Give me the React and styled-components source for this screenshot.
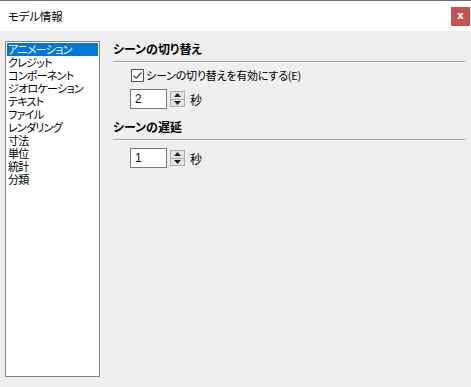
import React from "react";
import styled, { createGlobalStyle } from "styled-components";

const Global = createGlobalStyle`
  html, body { margin: 0; padding: 0; background: #efefef; }
  body {
    font-family: "Noto Sans CJK JP", "Noto Sans", sans-serif;
    font-size: 12px;
    color: #000;
    font-feature-settings: "palt" 1;
  }
  * { box-sizing: border-box; }
`;

const Window = styled.div`
  width: 471px;
  height: 387px;
  display: flex;
  flex-direction: column;
  border-top: 1px solid #6e6e6e;
  background: #efefef;
  overflow: hidden;
`;

const TitleBar = styled.div`
  height: 30px;
  flex: none;
  background: #fff;
  display: flex;
  align-items: center;
  justify-content: space-between;
  padding: 0 1px 0 8px;
`;

const Title = styled.div`
  font-size: 11.5px;
  letter-spacing: -0.2px;
  line-height: 16px;
  color: #000;
  margin-top: -1px;
`;

const CloseButton = styled.div`
  width: 19px;
  height: 19px;
  background: #c75050;
  color: #fff;
  font-family: "DejaVu Sans", sans-serif;
  font-weight: bold;
  font-size: 10px;
  line-height: 18px;
  text-align: center;
  margin-top: 1px;
`;

const Body = styled.div`
  flex: 1;
  display: flex;
  padding: 10px 6px 10px 5px;
`;

const ListBox = styled.div`
  width: 95px;
  height: 336px;
  flex: none;
  background: #fff;
  border: 1px solid #828790;
  padding: 1px;
`;

const ListItem = styled.div`
  height: 13px;
  line-height: 13px;
  font-size: 11px;
  letter-spacing: -0.7px;
  padding-left: 1px;
  white-space: nowrap;
  background: ${(p) => (p.$selected ? "#0078d7" : "transparent")};
  color: ${(p) => (p.$selected ? "#fff" : "#000")};
`;

const Panel = styled.div`
  flex: 1;
  display: flex;
  flex-direction: column;
  padding-left: 13px;
`;

const SectionTitle = styled.div`
  height: 16px;
  line-height: 16px;
  font-size: 12px;
  font-weight: bold;
  margin-top: ${(p) => p.$top}px;
`;

const Rule = styled.div`
  height: 2px;
  margin-top: 4px;
  border-top: 1px solid #a0a0a0;
  border-bottom: 1px solid #fff;
`;

const CheckRow = styled.label`
  display: flex;
  align-items: center;
  margin: 6px 0 0 18px;
  height: 13px;
  gap: 2px;
  font-size: 11px;
  letter-spacing: -0.2px;
  line-height: 13px;
`;

const CheckBox = styled.span`
  width: 13px;
  height: 13px;
  border: 1px solid #555;
  background: #fff;
  display: flex;
  align-items: center;
  justify-content: center;
`;

const SpinRow = styled.div`
  display: flex;
  align-items: center;
  margin: ${(p) => p.$top}px 0 0 17px;
  height: 20px;
`;

const NumberInput = styled.div`
  width: 37px;
  height: 20px;
  border: 1px solid #7a7a7a;
  background: #fff;
  padding-left: 4px;
  line-height: 18px;
  font-size: 12px;
  font-family: "Liberation Sans", sans-serif;
  color: #111;
`;

const Spinner = styled.div`
  width: 15px;
  height: 16px;
  margin-left: 3px;
  display: flex;
  flex-direction: column;
`;

const SpinButton = styled.div`
  flex: 1;
  background: #e5e5e5;
  border: 1px solid #adadad;
  ${(p) => (p.$down ? "border-top: none;" : "")}
  display: flex;
  align-items: center;
  justify-content: center;
`;

const Unit = styled.span`
  margin-left: 5px;
  font-size: 12px;
`;

const Up = () => (
  <svg width="7" height="4" viewBox="0 0 7 4"><path d="M0 4 L3.5 0 L7 4 Z" fill="#222" /></svg>
);
const Down = () => (
  <svg width="7" height="4" viewBox="0 0 7 4"><path d="M0 0 L3.5 4 L7 0 Z" fill="#222" /></svg>
);

const Spin = ({ value, top }) => (
  <SpinRow $top={top}>
    <NumberInput>{value}</NumberInput>
    <Spinner>
      <SpinButton><Up /></SpinButton>
      <SpinButton $down><Down /></SpinButton>
    </Spinner>
    <Unit>秒</Unit>
  </SpinRow>
);

const items = [
  "アニメーション",
  "クレジット",
  "コンポーネント",
  "ジオロケーション",
  "テキスト",
  "ファイル",
  "レンダリング",
  "寸法",
  "単位",
  "統計",
  "分類",
];

export default function App() {
  return (
    <>
      <Global />
      <Window>
        <TitleBar>
          <Title>モデル情報</Title>
          <CloseButton>x</CloseButton>
        </TitleBar>
        <Body>
          <ListBox>
            {items.map((t, i) => (
              <ListItem key={t} $selected={i === 0}>{t}</ListItem>
            ))}
          </ListBox>
          <Panel>
            <SectionTitle $top={0}>シーンの切り替え</SectionTitle>
            <Rule />
            <CheckRow>
              <CheckBox>
                <svg width="11" height="11" viewBox="0 0 11 11">
                  <path d="M1.5 5.5 L4.2 8.2 L9.5 2.5" fill="none" stroke="#444" strokeWidth="1.2" />
                </svg>
              </CheckBox>
              シーンの切り替えを有効にする(E)
            </CheckRow>
            <Spin value="2" top={7} />
            <SectionTitle $top={10}>シーンの遅延</SectionTitle>
            <Rule />
            <Spin value="1" top={7} />
          </Panel>
        </Body>
      </Window>
    </>
  );
}
